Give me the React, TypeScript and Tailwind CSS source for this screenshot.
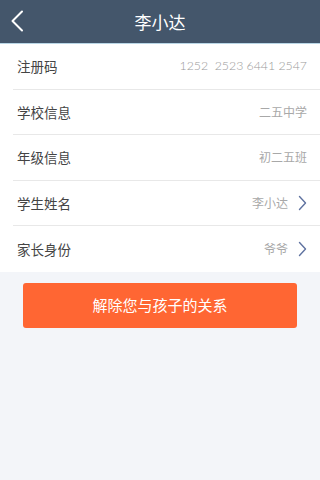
import React from "react";

const font = { fontFamily: '"Noto Sans CJK SC", "Noto Sans", sans-serif' };

function Chevron() {
  return (
    <svg width="9" height="16" viewBox="0 0 9 16" className="ml-[10px]">
      <path d="M1.5 1.5 L7.5 8 L1.5 14.5" fill="none" stroke="#5f72a0" strokeWidth="1.4" strokeLinecap="round" strokeLinejoin="round" />
    </svg>
  );
}

const rows: { label: string; value: string; arrow?: boolean; num?: boolean }[] = [
  { label: "注册码", value: "1252  2523 6441 2547", num: true },
  { label: "学校信息", value: "二五中学" },
  { label: "年级信息", value: "初二五班" },
  { label: "学生姓名", value: "李小达", arrow: true },
  { label: "家长身份", value: "爷爷", arrow: true },
];

export default function App() {
  return (
    <div className="w-[320px] h-[480px] bg-[#f3f5f9] flex flex-col" style={font}>
      <div className="h-[43px] bg-[#44566b] flex items-center relative shrink-0">
        <svg width="14" height="22" viewBox="0 0 14 22" className="absolute left-[10px] top-[10px]">
          <path d="M12 1.5 L2.5 11 L12 20.5" fill="none" stroke="#ffffff" strokeWidth="2" strokeLinecap="round" strokeLinejoin="round" />
        </svg>
        <div className="flex-1 text-center text-white text-[17px]">李小达</div>
      </div>
      <div className="h-[1px] bg-[#b9d6e6] shrink-0" />
      <div className="bg-white flex flex-col pl-[13px]">
        {rows.map((r, i) => (
          <div
            key={r.label}
            className={`h-[45.5px] flex items-center pr-[13px] ${i < rows.length - 1 ? "border-b border-[#e8e8e8]" : ""}`}
          >
            <div className="pl-[4px] text-[13.5px] text-[#444444] flex-1">{r.label}</div>
            {r.num ? (
              <div className="text-[12.3px] text-[#9a9a9a] font-light" style={{ fontFamily: '"Lato", "Noto Sans", sans-serif', whiteSpace: "pre" }}>
                {r.value}
              </div>
            ) : (
              <div className="text-[12px] text-[#a8a8a8]">{r.value}</div>
            )}
            {r.arrow && <Chevron />}
          </div>
        ))}
      </div>
      <div className="px-[23px] pt-[11px]">
        <button className="w-full h-[45px] bg-[#ff6633] rounded-[3px] text-white text-[15px]" style={font}>
          解除您与孩子的关系
        </button>
      </div>
    </div>
  );
}
